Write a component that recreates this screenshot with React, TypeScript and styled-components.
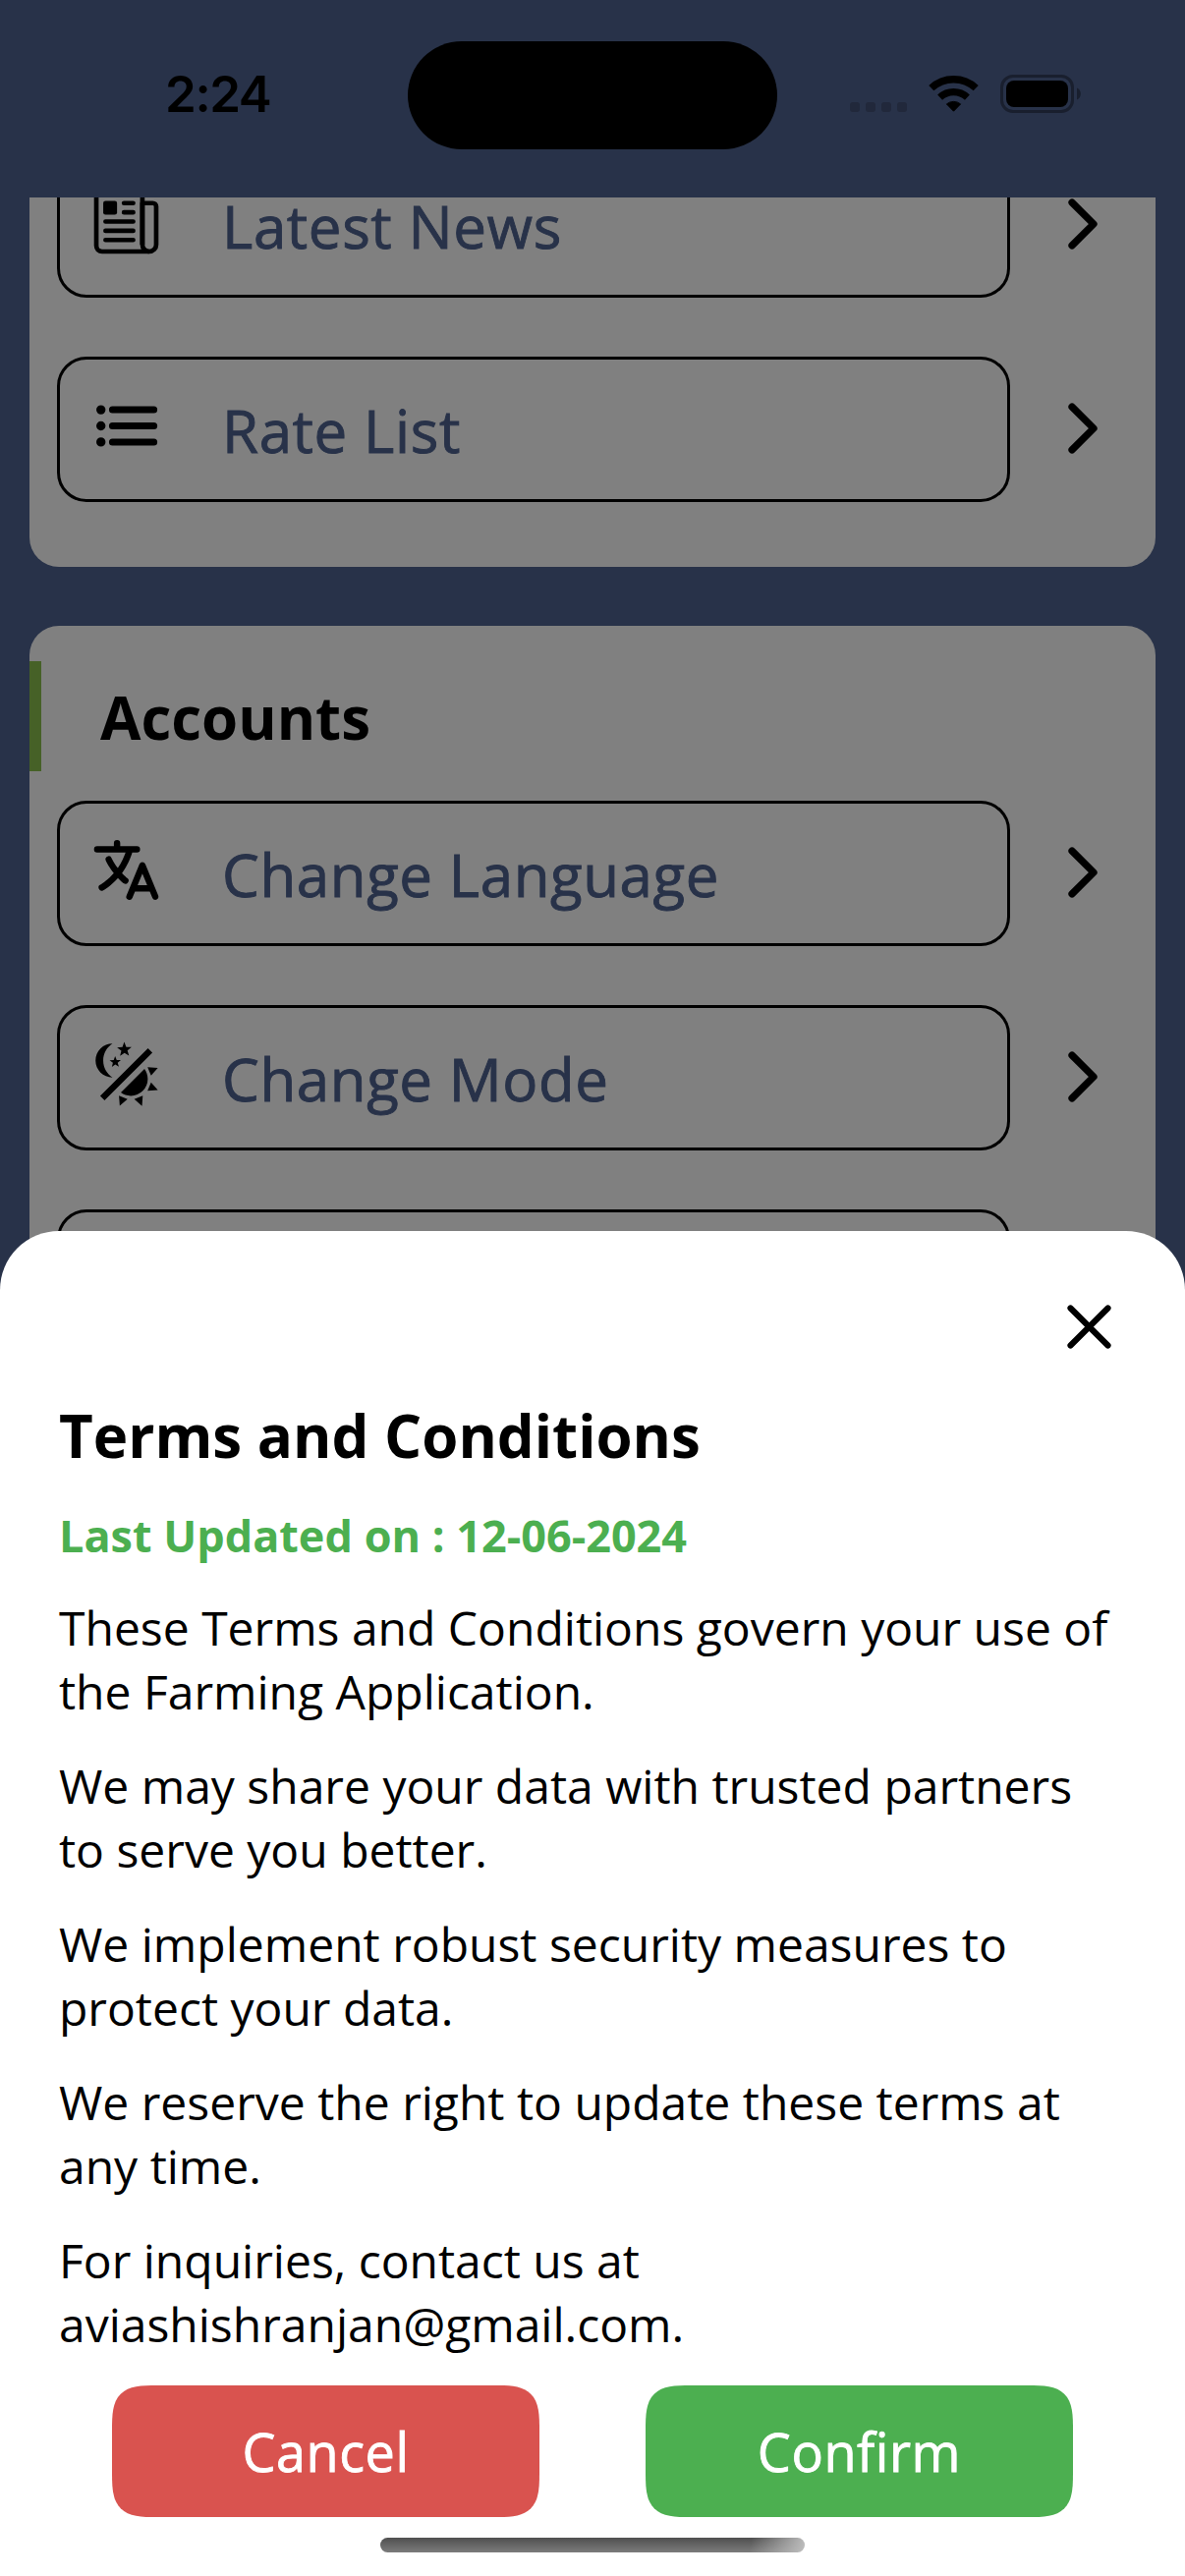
import React from "react";
import styled, { createGlobalStyle, css } from "styled-components";
import {
  IoChevronForward,
  IoCloseOutline,
  IoLanguage,
  IoList,
  IoNewspaperOutline,
} from "react-icons/io5";

const colors = {
  navy: "#283249",
  panel: "#808080",
  accent: "#466127",
  green: "#4caf50",
  red: "#d9534f",
};

const GlobalStyle = createGlobalStyle`
  * { box-sizing: border-box; }
  body {
    margin: 0;
    background: ${colors.navy};
    font-family: "Open Sans", "Noto Sans", sans-serif;
    font-variant-ligatures: none;
    color: #000;
  }
  h2, p { margin: 0; }
  button { font: inherit; border: 0; padding: 0; background: none; color: inherit; }
`;

const mediumText = css`
  letter-spacing: 0.01em;
  -webkit-text-stroke: 0.015em currentColor;
`;

const Screen = styled.div`
  position: relative;
  width: 1206px;
  height: 2622px;
  overflow: hidden;
  display: flex;
  flex-direction: column;
  background: ${colors.navy};
`;

const StatusBar = styled.header`
  flex: none;
  height: 201px;
  padding: 42px 106px 0 168px;
  display: flex;
  align-items: flex-start;
`;

const Clock = styled.time`
  width: 247px;
  margin-top: 23px;
  font: 600 51px/62px Inter, sans-serif;
  letter-spacing: -1.4px;
`;

const Island = styled.div`
  width: 376px;
  height: 110px;
  border-radius: 55px;
  background: #000;
`;

const StatusIcons = styled.div`
  flex: 1;
  height: 39px;
  margin-top: 34px;
  display: flex;
  align-items: flex-start;
  justify-content: flex-end;
  gap: 22px;
`;

const Signal = styled.div`
  display: flex;
  gap: 6px;
  margin-top: 28px;
`;

const SignalDot = styled.span`
  width: 10px;
  height: 10px;
  border-radius: 3px;
  background: #21283b;
`;

const WifiIcon = styled.svg`
  width: 51px;
  height: 38px;
  margin-top: 1px;
`;

const BatteryIcon = styled.svg`
  width: 82px;
  height: 39px;
`;

const Scroll = styled.main`
  flex: 1;
  min-height: 0;
  overflow: hidden;
  padding: 0 30px;
  display: flex;
  flex-direction: column;
  gap: 60px;
`;

const Card = styled.section<{ $scrolled?: boolean }>`
  flex: none;
  padding: 36px 0 66px;
  border-radius: 30px;
  background: ${colors.panel};
  ${(p) =>
    p.$scrolled &&
    css`
      margin-top: -82px;
    `}
`;

const CardTitle = styled.h2`
  height: 112px;
  margin-bottom: 30px;
  padding-left: 60px;
  border-left: 12px solid ${colors.accent};
  font-size: 60px;
  line-height: 114px;
  font-weight: 700;
`;

const Rows = styled.div`
  display: flex;
  flex-direction: column;
  gap: 60px;
  padding-left: 28px;
`;

const Row = styled.div`
  display: flex;
  align-items: center;
  gap: 35px;
`;

const RowBox = styled.div`
  width: 970px;
  height: 148px;
  padding-left: 30px;
  display: flex;
  align-items: center;
  gap: 60px;
  border: 3px solid #000;
  border-radius: 30px;
`;

const RowIcon = styled.span`
  display: flex;
  font-size: 75px;
  margin-bottom: 7px;
`;

const RowLabel = styled.span`
  margin-top: 2px;
  color: ${colors.navy};
  font-size: 60px;
  line-height: 50px;
  ${mediumText}
`;

const Chevron = styled(IoChevronForward)`
  width: 78px;
  height: 78px;
  margin-bottom: 2px;
`;

const Sheet = styled.div`
  position: absolute;
  inset: 1253px 0 0;
  padding: 54px 60px 0;
  display: flex;
  flex-direction: column;
  background: #fff;
  border-radius: 60px 60px 0 0;
`;

const CloseButton = styled.button`
  align-self: flex-end;
  display: flex;
  margin-right: -6px;
  font-size: 87px;
  path { stroke-width: 36px; }
`;

const Title = styled.h2`
  margin-top: 26px;
  font-size: 60px;
  line-height: 82px;
  font-weight: 700;
`;

const Updated = styled.p`
  margin-top: 30px;
  color: ${colors.green};
  font-size: 45px;
  line-height: 61px;
  font-weight: 700;
`;

const Terms = styled.div`
  display: flex;
  flex-direction: column;
  gap: 31px;
  margin-top: 31px;
  font-size: 48px;
  line-height: 65px;
`;

const Paragraph = styled.p`
  white-space: pre-line;
`;

const Actions = styled.div`
  display: flex;
  justify-content: space-between;
  margin: 30px 54px 0;
`;

const ActionButton = styled.button<{ $tone: string }>`
  width: 435px;
  height: 134px;
  background: ${(p) => p.$tone};
  color: #fff;
  font-size: 54px;
  ${mediumText}
  border-radius: 34px;
  @supports (corner-shape: superellipse(1.7)) {
    border-radius: 46px;
    corner-shape: superellipse(1.7);
  }
`;

const HomeIndicator = styled.div`
  align-self: center;
  width: 432px;
  height: 15px;
  margin-top: 21px;
  border-radius: 8px;
  background: linear-gradient(100deg, rgba(190, 190, 190, 0) 87%, #bebebe 100%),
    linear-gradient(#4f4f4f, #7c7c7c);
`;

const ThemeIcon = () => (
  <svg viewBox="0 0 24 24" width="1em" height="1em">
    <path d="M7.5,2C5.71,3.15 4.5,5.18 4.5,7.5C4.5,9.82 5.71,11.85 7.53,13C4.46,13 2,10.54 2,7.5A5.5,5.5 0 0,1 7.5,2M19.07,3.5L20.5,4.93L4.93,20.5L3.5,19.07L19.07,3.5M12.89,5.93L11.41,5L9.97,6L10.39,4.3L9,3.24L10.75,3.12L11.33,1.47L12,3.1L13.73,3.13L12.38,4.26L12.89,5.93M9.59,9.54L8.43,8.81L7.31,9.59L7.65,8.27L6.56,7.44L7.92,7.35L8.37,6.06L8.88,7.33L10.24,7.36L9.19,8.23L9.59,9.54M19,13.5A5.5,5.5 0 0,1 13.5,19C12.28,19 11.15,18.6 10.24,17.93L17.93,10.24C18.6,11.15 19,12.28 19,13.5M14.6,20.08L17.37,18.93L17.13,22.28L14.6,20.08M18.93,17.38L20.08,14.61L22.28,17.15L18.93,17.38M20.08,12.42L18.94,9.64L22.28,9.88L20.08,12.42M9.63,18.93L12.4,20.08L9.87,22.27L9.63,18.93Z" />
  </svg>
);

const MenuRow = ({ icon, label }: { icon?: React.ReactNode; label?: string }) => (
  <Row>
    <RowBox>
      <RowIcon>{icon}</RowIcon>
      <RowLabel>{label}</RowLabel>
    </RowBox>
    <Chevron />
  </Row>
);

const terms = [
  "These Terms and Conditions govern your use of\nthe Farming Application.",
  "We may share your data with trusted partners\nto serve you better.",
  "We implement robust security measures to\nprotect your data.",
  "We reserve the right to update these terms at\nany time.",
  "For inquiries, contact us at\naviashishranjan@gmail.com.",
];

export default function App() {
  return (
    <>
      <GlobalStyle />
      <Screen>
        <StatusBar>
          <Clock>2:24</Clock>
          <Island />
          <StatusIcons>
            <Signal>
              <SignalDot />
              <SignalDot />
              <SignalDot />
              <SignalDot />
            </Signal>
            <WifiIcon viewBox="0 0 51 38">
              <g fill="none" stroke="#000">
                <path d="M2.8 12.650A33.300 33.300 0 0 1 48.200 12.650" strokeWidth="7.400" />
                <path d="M11.600 22.100A20.400 20.400 0 0 1 39.400 22.100" strokeWidth="7.200" />
              </g>
              <path d="M25.500 36.200L18.400 28.900A11.300 11.300 0 0 1 32.600 28.900Z" stroke="#000" strokeWidth="1" strokeLinejoin="round" />
            </WifiIcon>
            <BatteryIcon viewBox="0 0 82 39">
              <rect x="1.500" y="1.500" width="72" height="36" rx="11.500" fill="none" stroke="#191f2e" strokeWidth="3" />
              <rect x="6" y="6" width="63" height="27" rx="8" />
              <path d="M78 13.500c2.400 1 3.800 3.300 3.800 6s-1.400 5-3.800 6z" fill="#191f2e" />
            </BatteryIcon>
          </StatusIcons>
        </StatusBar>

        <Scroll>
          <Card $scrolled>
            <Rows>
              <MenuRow icon={<IoNewspaperOutline />} label="Latest News" />
              <MenuRow icon={<IoList />} label="Rate List" />
            </Rows>
          </Card>
          <Card>
            <CardTitle>Accounts</CardTitle>
            <Rows>
              <MenuRow icon={<IoLanguage />} label="Change Language" />
              <MenuRow icon={<ThemeIcon />} label="Change Mode" />
              <MenuRow />
            </Rows>
          </Card>
        </Scroll>

        <Sheet>
          <CloseButton aria-label="Close">
            <IoCloseOutline />
          </CloseButton>
          <Title>Terms and Conditions</Title>
          <Updated>Last Updated on : 12-06-2024</Updated>
          <Terms>
            {terms.map((text) => (
              <Paragraph key={text}>{text}</Paragraph>
            ))}
          </Terms>
          <Actions>
            <ActionButton $tone={colors.red}>Cancel</ActionButton>
            <ActionButton $tone={colors.green}>Confirm</ActionButton>
          </Actions>
          <HomeIndicator />
        </Sheet>
      </Screen>
    </>
  );
}
